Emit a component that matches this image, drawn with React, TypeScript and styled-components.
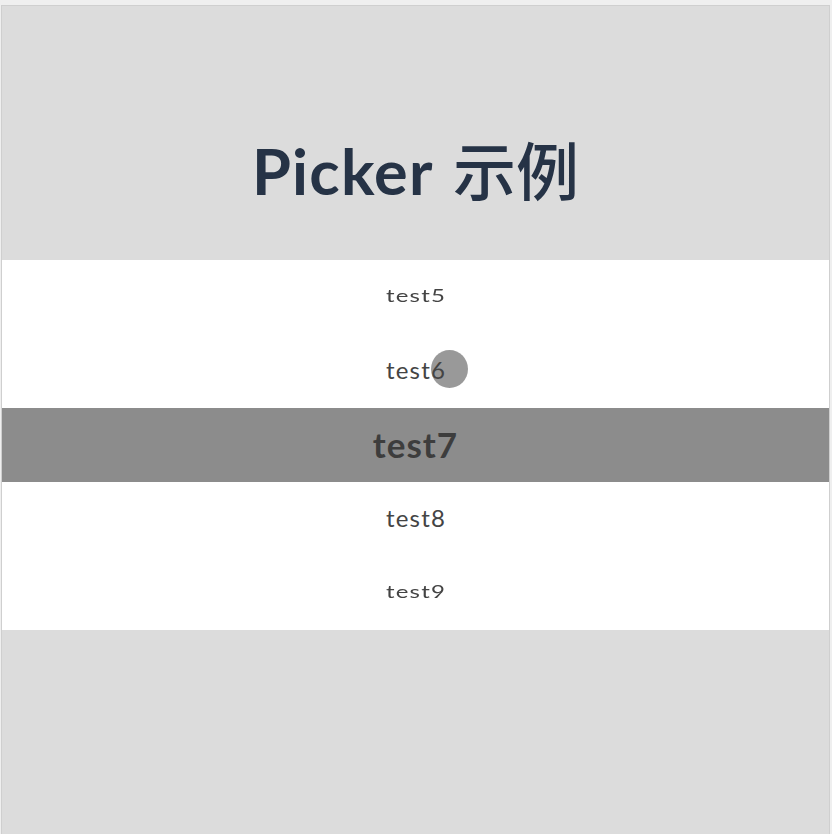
import styled, { createGlobalStyle } from "styled-components";

const GlobalStyle = createGlobalStyle`
  html, body {
    margin: 0;
    padding: 0;
    background: #efefef;
  }
`;

const items = [
  { label: "test5", level: 2 },
  { label: "test6", level: 1 },
  { label: "test7", level: 0 },
  { label: "test8", level: 1 },
  { label: "test9", level: 2 },
];

const App = () => {
  return (
    <>
      <GlobalStyle />
      <Frame>
        <Header>
          <Title>
            <Latin>Picker</Latin> <Han>示例</Han>
          </Title>
        </Header>
        <Wheel>
          <Touch />
          {items.map((item) => (
            <Row key={item.label} $selected={item.level === 0}>
              <Label $level={item.level}>{item.label}</Label>
            </Row>
          ))}
        </Wheel>
        <Footer />
      </Frame>
    </>
  );
};

export default App;

const Frame = styled.div`
  box-sizing: border-box;
  margin: 5px 2px 0 1px;
  height: 829px;
  border: 1px solid #cfcfcf;
  border-bottom: none;
  background: #dcdcdc;
  display: flex;
  flex-direction: column;
`;

const Header = styled.div`
  height: 254px;
  display: flex;
  align-items: center;
  justify-content: center;
`;

const Title = styled.h1`
  margin: 0;
  margin-top: 68px;
  font-family: Lato, "Noto Sans CJK SC", sans-serif;
  font-size: 63px;
  color: #263346;
  white-space: pre;
  word-spacing: 4px;
`;

const Latin = styled.span`
  font-weight: 700;
  letter-spacing: 1.2px;
`;

const Han = styled.span`
  font-family: "Noto Sans CJK SC", sans-serif;
  font-weight: 500;
  letter-spacing: 0;
`;

const Wheel = styled.div`
  position: relative;
  background: #fff;
  display: flex;
  flex-direction: column;
`;

const Row = styled.div<{ $selected: boolean }>`
  box-sizing: border-box;
  height: 74px;
  padding-bottom: 3px;
  display: flex;
  align-items: center;
  justify-content: center;
  background: ${(p) => (p.$selected ? "#8c8c8c" : "transparent")};
`;

const Label = styled.span<{ $level: number }>`
  position: relative;
  z-index: 1;
  font-family: Lato, sans-serif;
  color: ${(p) => (p.$level === 0 ? "#3d3d3d" : "#444")};
  font-size: ${(p) => (p.$level === 0 ? "35px" : "24px")};
  font-weight: ${(p) => (p.$level === 0 ? 700 : 400)};
  transform: scaleY(${(p) => (p.$level === 2 ? 0.72 : 1)});
  letter-spacing: ${(p) => (p.$level === 0 ? "1px" : "1.2px")};
  margin-left: ${(p) => (p.$level === 0 ? "0" : "1px")};
`;

const Touch = styled.div`
  position: absolute;
  left: 429px;
  top: 90px;
  width: 37px;
  height: 38px;
  border-radius: 50%;
  background: rgba(128, 128, 128, 0.8);
  filter: blur(0.6px);
`;

const Footer = styled.div`
  flex: 1;
`;
